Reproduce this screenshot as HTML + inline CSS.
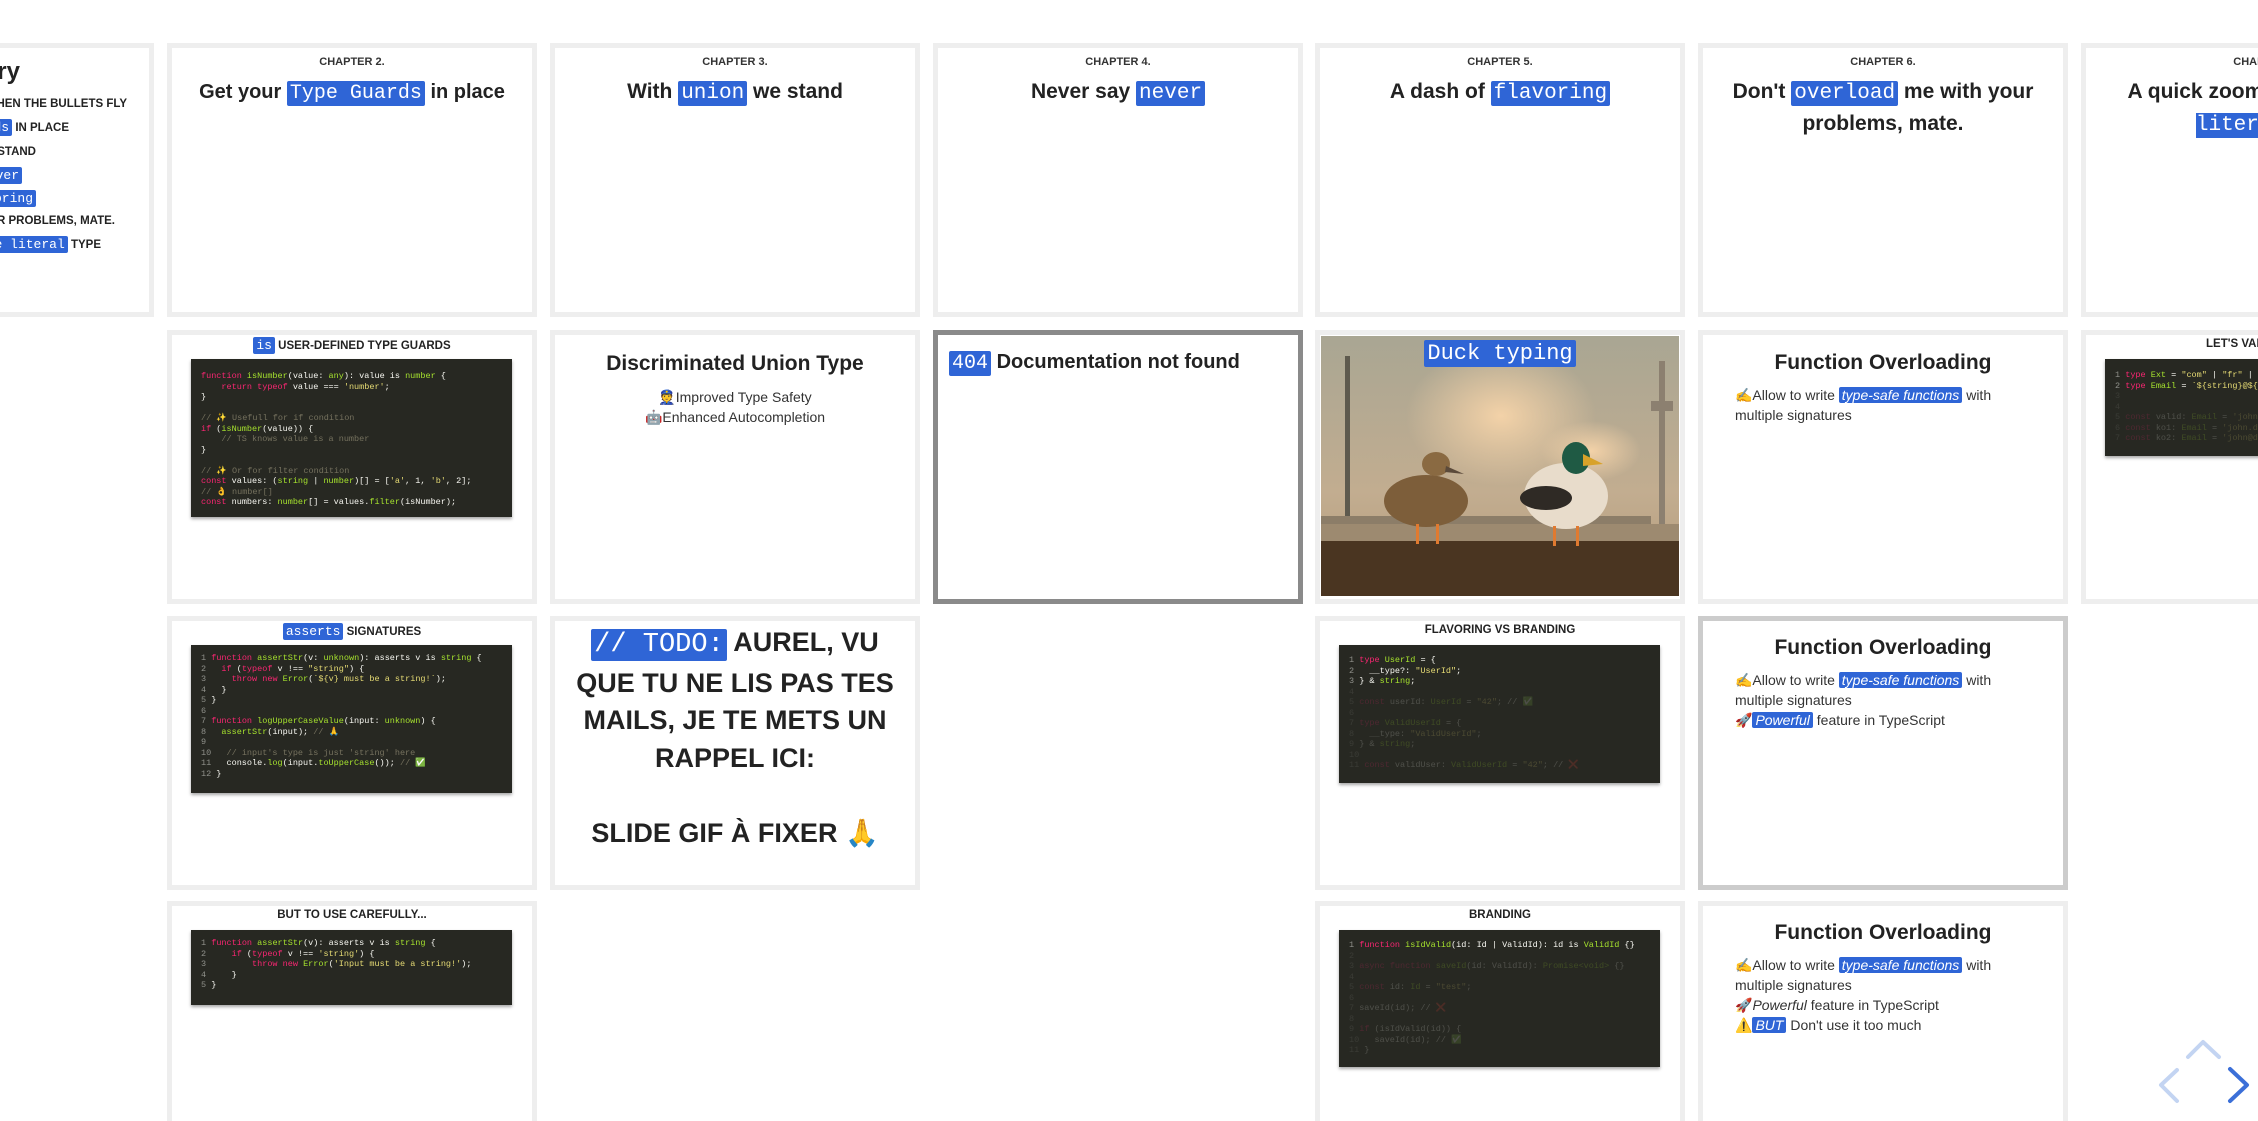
<!DOCTYPE html>
<html style="overflow:hidden"><head><meta charset="utf-8"><style>
*{margin:0;padding:0;box-sizing:border-box}
html,body{width:2258px;height:1121px;overflow:hidden}
body{background:#fff;position:relative;font-family:"Liberation Sans","DejaVu Sans",sans-serif;color:#222}
.c{position:absolute;width:370px;height:274px;border:5px solid #eeeeee;background:#fff;overflow:hidden}
.cur{border-color:#8a8a8a}
.sel{border-color:#cccccc}
.ch{position:absolute;left:0;right:0;top:8px;text-align:center;font-size:11px;font-weight:bold;color:#333}
.t{position:absolute;left:6px;right:6px;text-align:center;font-size:21px;font-weight:bold;line-height:30px;color:#222}
.h{background:#2f65d6;color:#fff;font-family:"Liberation Mono",monospace;font-weight:normal;padding:1px 3px;border-radius:2px}
.hi{background:#2f65d6;color:#fff;font-style:italic;padding:0 3px;border-radius:2px}
.lab{position:absolute;left:0;right:0;top:3px;text-align:center;font-size:11.5px;font-weight:bold;color:#222}
.code{position:absolute;left:19px;width:321px;background:#272822;box-shadow:0 2px 3px rgba(0,0,0,.35);font-family:"Liberation Mono",monospace;font-size:8.5px;line-height:10.5px;color:#f8f8f2;padding:12px 10px;white-space:pre;overflow:hidden}
.k{color:#f92672}.g{color:#a6e22e}.s{color:#e6db74}.m{color:#75715e}.n{color:#8f908a}
.dim{opacity:.18}
.body{position:absolute;left:32px;right:20px;font-size:14px;line-height:20px;color:#333}
.sum{position:absolute;font-size:11.5px;font-weight:bold;white-space:nowrap;color:#222}
</style></head><body>

<div class="c" style="left:-216px;top:43px"></div>
<div class="sum" style="right:2238px;top:58px;font-size:24px">Summary</div>
<div class="sum" style="right:2131px;top:98px">TYPE GUARDS WHEN THE BULLETS FLY</div>
<div class="sum" style="right:2189px;top:120px">GET YOUR <span class="h" style="font-size:13px">Type Guards</span> IN PLACE</div>
<div class="sum" style="right:2222px;top:146px">WITH UNION WE STAND</div>
<div class="sum" style="right:2236px;top:168px">NEVER SAY <span class="h" style="font-size:13px">never</span></div>
<div class="sum" style="right:2222px;top:191px">A DASH OF <span class="h" style="font-size:13px">flavoring</span></div>
<div class="sum" style="right:2143px;top:215px">DON'T OVERLOAD ME WITH YOUR PROBLEMS, MATE.</div>
<div class="sum" style="right:2157px;top:237px">A QUICK ZOOM <span class="h" style="font-size:13px">template literal</span> TYPE</div>

<div class="c" style="left:167px;top:43px"><div class="ch">CHAPTER 2.</div><div class="t" style="top:29px;font-size:20px">Get your <span class="h">Type Guards</span> in place</div></div>
<div class="c" style="left:550px;top:43px"><div class="ch">CHAPTER 3.</div><div class="t" style="top:29px">With <span class="h">union</span> we stand</div></div>
<div class="c" style="left:933px;top:43px"><div class="ch">CHAPTER 4.</div><div class="t" style="top:29px">Never say <span class="h">never</span></div></div>
<div class="c" style="left:1315px;top:43px"><div class="ch">CHAPTER 5.</div><div class="t" style="top:29px">A dash of <span class="h">flavoring</span></div></div>
<div class="c" style="left:1698px;top:43px"><div class="ch">CHAPTER 6.</div><div class="t" style="top:29px;line-height:30px">Don't <span class="h">overload</span> me with your problems, mate.</div></div>
<div class="c" style="left:2081px;top:43px"><div class="ch">CHAPTER 7.</div><div class="t" style="top:29px">A quick zoom on <span class="h">template literal</span> type</div></div>

<div class="c" style="left:167px;top:330px"><div class="lab"><span class="h" style="font-size:13px">is</span> USER-DEFINED TYPE GUARDS</div>
<div class="code" style="top:24px;height:158px"><span class="k">function</span> <span class="g">isNumber</span>(value: <span class="g">any</span>): value is <span class="g">number</span> {
    <span class="k">return</span> <span class="k">typeof</span> value === <span class="s">'number'</span>;
}

<span class="m">// ✨ Usefull for if condition</span>
<span class="k">if</span> (<span class="g">isNumber</span>(value)) {
    <span class="m">// TS knows value is a number</span>
}

<span class="m">// ✨ Or for filter condition</span>
<span class="k">const</span> values: (<span class="g">string</span> | <span class="g">number</span>)[] = [<span class="s">'a'</span>, 1, <span class="s">'b'</span>, 2];
<span class="m">// 👌 number[]</span>
<span class="k">const</span> numbers: <span class="g">number</span>[] = values.<span class="g">filter</span>(isNumber);</div></div>

<div class="c" style="left:550px;top:330px"><div class="t" style="top:14px;font-size:21px">Discriminated Union Type</div>
<div style="position:absolute;left:0;right:0;top:52px;text-align:center;font-size:14px;line-height:20px;color:#333">👮Improved Type Safety<br>🤖Enhanced Autocompletion</div></div>

<div class="c cur" style="left:933px;top:330px"><div class="t" style="top:12px;font-size:20px;text-align:left;left:11px"><span class="h">404</span> Documentation not found</div></div>

<div class="c" style="left:1315px;top:330px">
<svg style="position:absolute;left:1px;top:1px" width="358" height="260" viewBox="0 0 358 260">
<defs><linearGradient id="sky" x1="0" y1="0" x2="0" y2="1"><stop offset="0" stop-color="#a9a693"/><stop offset=".6" stop-color="#c2ad90"/><stop offset="1" stop-color="#b59a7a"/></linearGradient>
<radialGradient id="cl" cx=".5" cy=".5" r=".5"><stop offset="0" stop-color="#f3d2a8"/><stop offset="1" stop-color="#f3d2a8" stop-opacity="0"/></radialGradient></defs>
<rect width="358" height="260" fill="url(#sky)"/>
<ellipse cx="180" cy="80" rx="95" ry="70" fill="url(#cl)"/>
<ellipse cx="270" cy="115" rx="50" ry="30" fill="url(#cl)"/>
<rect x="24" y="20" width="5" height="180" fill="#5e5a4e"/>
<rect x="338" y="25" width="6" height="180" fill="#8c8070"/><rect x="330" y="65" width="22" height="10" fill="#8c8070"/>
<rect x="0" y="180" width="330" height="8" fill="#8c7d68"/>
<rect x="0" y="188" width="358" height="22" fill="#9d8a70"/>
<rect x="0" y="205" width="358" height="55" fill="#4a3521"/>
<ellipse cx="105" cy="165" rx="42" ry="26" fill="#7d5e3a"/>
<ellipse cx="115" cy="128" rx="14" ry="12" fill="#8a6a42"/>
<path d="M125 130 L143 138 L124 136Z" fill="#5b4a3a"/>
<rect x="95" y="188" width="3" height="20" fill="#e07a30"/><rect x="115" y="188" width="3" height="20" fill="#e07a30"/>
<ellipse cx="245" cy="160" rx="42" ry="33" fill="#e8dccb"/>
<ellipse cx="225" cy="162" rx="26" ry="12" fill="#2f2a25"/>
<ellipse cx="255" cy="122" rx="14" ry="16" fill="#1f5a44"/>
<path d="M262 118 L282 128 L262 130Z" fill="#d8a22a"/>
<rect x="232" y="190" width="3" height="20" fill="#e07a30"/><rect x="255" y="190" width="3" height="20" fill="#e07a30"/>
</svg>
<div class="t" style="top:2px;font-size:22px"><span class="h">Duck typing</span></div></div>

<div class="c" style="left:1698px;top:330px"><div class="t" style="top:13px;font-size:21px">Function Overloading</div>
<div class="body" style="top:50px">✍️Allow to write <span class="hi">type-safe functions</span> with multiple signatures</div></div>

<div class="c" style="left:2081px;top:330px"><div class="lab" style="left:120px;right:auto">LET'S VALIDATE</div>
<div class="code" style="top:24px;height:97px;padding-top:11px"><span class="n">1</span> <span class="k">type</span> <span class="g">Ext</span> = <span class="s">"com"</span> | <span class="s">"fr"</span> | <span class="s">"io"</span>;
<span class="n">2</span> <span class="k">type</span> <span class="g">Email</span> = <span class="s">`${string}@${string}.${Ext}`</span>;
<span class="dim"><span class="n">3</span>
<span class="n">4</span>
<span class="n">5</span> <span class="k">const</span> valid: <span class="g">Email</span> = <span class="s">'john@doe.com'</span>;
<span class="n">6</span> <span class="k">const</span> ko1: <span class="g">Email</span> = <span class="s">'john.doe.com'</span>;
<span class="n">7</span> <span class="k">const</span> ko2: <span class="g">Email</span> = <span class="s">'john@doe.net'</span>;</span></div></div>

<div class="c" style="left:167px;top:616px"><div class="lab"><span class="h" style="font-size:13px">asserts</span> SIGNATURES</div>
<div class="code" style="top:24px;height:148px;padding-top:8px"><span class="n">1</span> <span class="k">function</span> <span class="g">assertStr</span>(v: <span class="g">unknown</span>): asserts v is <span class="g">string</span> {
<span class="n">2</span>   <span class="k">if</span> (<span class="k">typeof</span> v !== <span class="s">"string"</span>) {
<span class="n">3</span>     <span class="k">throw</span> <span class="k">new</span> <span class="g">Error</span>(<span class="s">`${v} must be a string!`</span>);
<span class="n">4</span>   }
<span class="n">5</span> }
<span class="n">6</span>
<span class="n">7</span> <span class="k">function</span> <span class="g">logUpperCaseValue</span>(input: <span class="g">unknown</span>) {
<span class="n">8</span>   <span class="g">assertStr</span>(input); <span class="m">// 🙏</span>
<span class="n">9</span>
<span class="n">10</span>   <span class="m">// input's type is just 'string' here</span>
<span class="n">11</span>   console.<span class="g">log</span>(input.<span class="g">toUpperCase</span>()); <span class="m">// ✅</span>
<span class="n">12</span> }</div></div>

<div class="c" style="left:550px;top:616px"><div style="position:absolute;left:10px;right:10px;top:3px;text-align:center;font-size:27px;font-weight:bold;line-height:37.5px;color:#222"><span class="h">// TODO:</span> AUREL, VU QUE TU NE LIS PAS TES MAILS, JE TE METS UN RAPPEL ICI:<br><br>SLIDE GIF À FIXER 🙏</div></div>

<div class="c" style="left:1315px;top:616px"><div class="lab">FLAVORING VS BRANDING</div>
<div class="code" style="top:24px;height:138px;padding-top:10px"><span class="n">1</span> <span class="k">type</span> <span class="g">UserId</span> = {
<span class="n">2</span>   __type?: <span class="s">"UserId"</span>;
<span class="n">3</span> } &amp; <span class="g">string</span>;
<span class="dim"><span class="n">4</span>
<span class="n">5</span> <span class="k">const</span> userId: <span class="g">UserId</span> = <span class="s">"42"</span>; // ✅
<span class="n">6</span>
<span class="n">7</span> <span class="k">type</span> <span class="g">ValidUserId</span> = {
<span class="n">8</span>   __type: <span class="s">"ValidUserId"</span>;
<span class="n">9</span> } &amp; <span class="g">string</span>;
<span class="n">10</span>
<span class="n">11</span> <span class="k">const</span> validUser: <span class="g">ValidUserId</span> = <span class="s">"42"</span>; // ❌</span></div></div>

<div class="c sel" style="left:1698px;top:616px"><div class="t" style="top:12px;font-size:21px">Function Overloading</div>
<div class="body" style="top:49px">✍️Allow to write <span class="hi">type-safe functions</span> with multiple signatures<br>🚀<span class="hi">Powerful</span> feature in TypeScript</div></div>

<div class="c" style="left:167px;top:901px;height:240px"><div class="lab">BUT TO USE CAREFULLY...</div>
<div class="code" style="top:24px;height:75px;padding-top:8px"><span class="n">1</span> <span class="k">function</span> <span class="g">assertStr</span>(v): asserts v is <span class="g">string</span> {
<span class="n">2</span>     <span class="k">if</span> (<span class="k">typeof</span> v !== <span class="s">'string'</span>) {
<span class="n">3</span>         <span class="k">throw</span> <span class="k">new</span> <span class="g">Error</span>(<span class="s">'Input must be a string!'</span>);
<span class="n">4</span>     }
<span class="n">5</span> }</div></div>

<div class="c" style="left:1315px;top:901px;height:240px"><div class="lab">BRANDING</div>
<div class="code" style="top:24px;height:137px;padding-top:10px"><span class="n">1</span> <span class="k">function</span> <span class="g">isIdValid</span>(id: Id | ValidId): id is <span class="g">ValidId</span> {}
<span class="dim"><span class="n">2</span>
<span class="n">3</span> <span class="k">async function</span> <span class="g">saveId</span>(id: ValidId): <span class="g">Promise&lt;void&gt;</span> {}
<span class="n">4</span>
<span class="n">5</span> <span class="k">const</span> id: <span class="g">Id</span> = <span class="s">"test"</span>;
<span class="n">6</span>
<span class="n">7</span> saveId(id); // ❌
<span class="n">8</span>
<span class="n">9</span> <span class="k">if</span> (isIdValid(id)) {
<span class="n">10</span>   saveId(id); // ✅
<span class="n">11</span> }</span></div></div>

<div class="c" style="left:1698px;top:901px;height:240px"><div class="t" style="top:12px;font-size:21px">Function Overloading</div>
<div class="body" style="top:49px">✍️Allow to write <span class="hi">type-safe functions</span> with multiple signatures<br>🚀<i>Powerful</i> feature in TypeScript<br>⚠️<span class="hi">BUT</span> Don't use it too much</div></div>

<svg style="position:absolute;left:0;top:0" width="2258" height="1121">
<g fill="none" stroke-width="4" stroke-linecap="round" stroke-linejoin="round">
<path d="M2188 1057 L2203 1042 L2219 1057" stroke="#c3d4f2"/>
<path d="M2177 1070 L2161 1085 L2177 1101" stroke="#c3d4f2"/>
<path d="M2230 1069 L2247 1085 L2230 1101" stroke="#3b6fd8"/>
</g></svg>
</body></html>
